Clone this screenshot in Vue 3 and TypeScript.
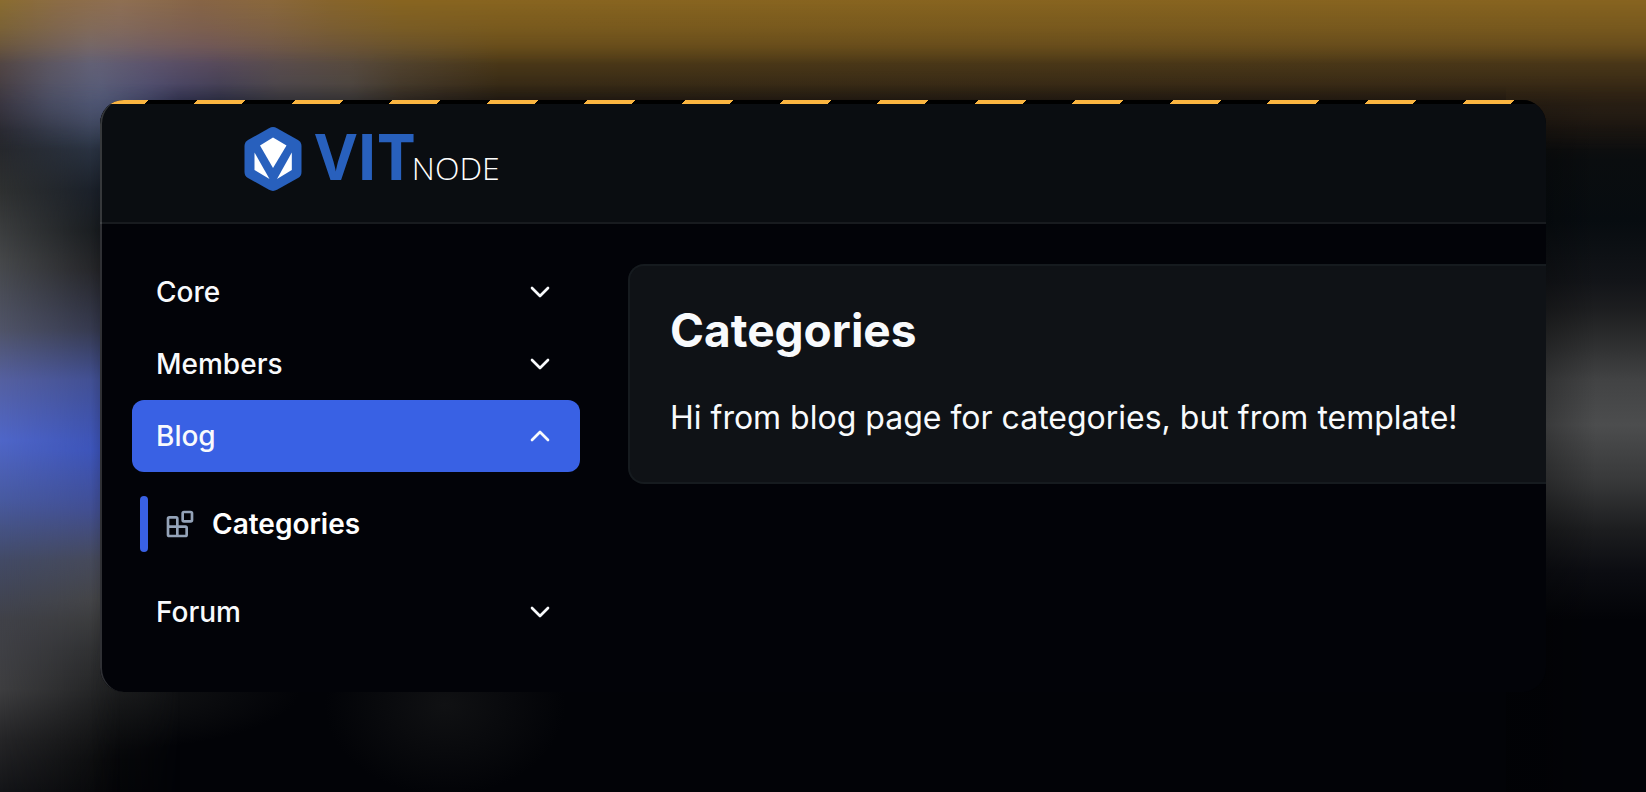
<script setup lang="ts">
import { ref } from 'vue'

interface Section {
  id: string
  label: string
  pages: string[]
}

const sections: Section[] = [
  { id: 'core', label: 'Core', pages: [] },
  { id: 'members', label: 'Members', pages: [] },
  { id: 'blog', label: 'Blog', pages: ['Categories'] },
  { id: 'forum', label: 'Forum', pages: [] },
]

const openId = ref('blog')

function toggle(id: string) {
  openId.value = openId.value === id ? '' : id
}
</script>

<template>
  <div class="backdrop">
    <div class="glow right"></div>
    <div class="glow left"></div>
    <div class="glow top"></div>
    <div class="window">
      <div class="stripes"></div>
      <header class="header">
        <a class="brand" href="#" aria-label="VitNode">
          <svg class="mark" viewBox="0 0 58 64" aria-hidden="true">
            <path
              d="M25 1.2Q29 -1 33 1.2L54 13Q57.500 15 57.500 19V45Q57.500 49 54 51L33 62.800Q29 65 25 62.800L4 51Q0.500 49 0.500 45V19Q0.500 15 4 13Z"
              fill="#2860bd"
            />
            <path d="M29 10.500L42.500 18.500L29 41L16 18.500Z" fill="#fff" />
            <path d="M10.500 25.500L25.500 52L10.500 43Z" fill="#fff" />
            <path d="M47.800 25.500V43L33 52Z" fill="#fff" />
          </svg>
          <span class="vit">VIT</span><span class="node">NODE</span>
        </a>
      </header>
      <div class="body">
        <nav class="nav" aria-label="Admin">
          <div v-for="s in sections" :key="s.id">
            <button
              type="button"
              class="item"
              :class="{ active: openId === s.id }"
              :aria-expanded="openId === s.id"
              @click="toggle(s.id)"
            >
              <span>{{ s.label }}</span>
              <svg class="icon" viewBox="0 0 24 24" aria-hidden="true">
                <path :d="openId === s.id ? 'm18 15-6-6-6 6' : 'm6 9 6 6 6-6'" />
              </svg>
            </button>
            <div v-if="openId === s.id && s.pages.length" class="sub">
              <a v-for="p in s.pages" :key="p" class="page" href="#" aria-current="page">
                <svg class="icon muted" viewBox="0 0 24 24" aria-hidden="true">
                  <rect width="7" height="7" x="14" y="3" rx="1" />
                  <path
                    d="M10 21V8a1 1 0 0 0-1-1H4a1 1 0 0 0-1 1v12a1 1 0 0 0 1 1h12a1 1 0 0 0 1-1v-5a1 1 0 0 0-1-1H3"
                  />
                </svg>
                <span>{{ p }}</span>
              </a>
            </div>
          </div>
        </nav>
        <main class="card">
          <h1>Categories</h1>
          <p>Hi from blog page for categories, but from template!</p>
        </main>
      </div>
    </div>
  </div>
</template>

<style>
body {
  margin: 0;
  background: #020307;
}
</style>

<style scoped>
.backdrop {
  position: relative;
  box-sizing: border-box;
  min-height: 100vh;
  padding: 100px;
  overflow: hidden;
  font-family: Inter, 'Liberation Sans', sans-serif;
  color: #f8fafc;
  background:
    radial-gradient(ellipse 120px 90px at 445px 705px, #101113, transparent),
    radial-gradient(ellipse 200px 60px at 100px 690px, #161718, transparent),
    #020307;
}

/* Soft coloured light behind the window, one band per side. */
.glow,
.glow::before,
.glow::after {
  position: absolute;
  top: 0;
  left: 0;
}

.glow::before,
.glow::after {
  width: 100%;
  height: 100%;
}

.glow.top {
  width: 100%;
  height: 150px;
  background: linear-gradient(90deg, #3c3844, #4c5068 50px, #525a7a 100px, #464a70 150px, #3c3e62 180px, #353852 220px, #42424a 280px, #444242 350px, #383028 400px, #302820 440px, #251d14 500px, #281e13);
  mask-image: linear-gradient(#000 84px, transparent);
}

.glow.top::before {
  content: '';
  background: linear-gradient(90deg, #5c4c44, #6a6474 90px, #66586a 150px, #665260 210px, #635048 300px, #5c4a30 400px, #5a4319 500px, #58411a);
  mask-image: linear-gradient(#000 45px, transparent 106px);
}

.glow.top::after {
  content: '';
  background: linear-gradient(90deg, #8a6d30, #8c6c45 60px, #8f6f52 120px, #876545 200px, #8a683c 270px, #87652c 330px, #886520 400px, #876420);
  mask-image: linear-gradient(#000, #000a 28px, transparent 64px);
}

.glow.left {
  width: 180px;
  height: 100%;
  background: linear-gradient(#525a78 95px, #303c50 140px, #151c28 190px, #101418 230px, #1c1c1f 270px, #2e3248 330px, #3c4b90 380px, #3850b8 450px, #404c90 510px, #474a58 560px, #454545 600px, #2c2d2e 650px, #1a1b1c 700px, #08090a 760px, #050608);
  mask-image: linear-gradient(90deg, #000 90px, transparent);
}

.glow.left::before {
  content: '';
  background: linear-gradient(#38353e 95px, #22242a 130px, #2e3030 190px, #454749 260px, #505468 330px, #5560a0 380px, #4f66c8 440px, #485aa0 500px, #424a66 560px, #404148 620px, #3e3e40 690px, #252527 740px, #141518 790px);
  mask-image: linear-gradient(90deg, #000, #0009 50px, transparent 120px);
}

.glow.right {
  left: auto;
  right: 0;
  width: 140px;
  height: 100%;
  background: linear-gradient(#281e13 95px, #231b14 110px, #14110f 128px, #0a0d0f 160px, #070c10 220px, #121418 280px, #1d1e20 310px, #2c2d2e 340px, #424344 380px, #4c4d4e 425px, #38393a 480px, #1c1d1f 530px, #0c0d12 570px, #020307 620px);
}

.glow.right::before {
  content: '';
  background: linear-gradient(90deg, rgba(0, 0, 0, 0.25) 40px, transparent 90px);
}

.window {
  position: relative;
  overflow: hidden;
  border-radius: 24px;
  background: #020308;
}

.window::after {
  content: '';
  position: absolute;
  inset: 0;
  border-left: 2px solid rgba(255, 255, 255, 0.18);
  border-radius: inherit;
  pointer-events: none;
}

.stripes {
  height: 4px;
  background: repeating-linear-gradient(135deg, #fbb540 0 34px, #000 34px 69px);
}

.header {
  padding: 23px 144px 31px;
  background: #0a0d11;
  border-bottom: 2px solid #181b1f;
}

.brand {
  display: flex;
  width: max-content;
  height: 64px;
  align-items: baseline;
  color: #fff;
  text-decoration: none;
  font-family: 'Open Sans', 'Noto Sans', sans-serif;
  line-height: 58px;
}

.mark {
  width: 58px;
  height: 64px;
  margin-right: 13px;
  align-self: center;
}

.vit {
  font-size: 64px;
  font-weight: 700;
  color: #2860bd;
}

.node {
  margin-left: -3px;
  font-size: 32px;
  font-weight: 300;
}

.body {
  display: grid;
  grid-template-columns: 448px minmax(0, 1fr);
  column-gap: 48px;
  align-items: start;
  padding: 32px 0 44px 32px;
}

.item {
  display: flex;
  box-sizing: border-box;
  width: 100%;
  height: 72px;
  align-items: center;
  justify-content: space-between;
  padding: 0 24px;
  border: 0;
  border-radius: 12px;
  background: transparent;
  color: inherit;
  font: 500 28px/40px Inter, 'Liberation Sans', sans-serif;
  cursor: pointer;
}

.item.active {
  background: #3961e4;
}

.icon {
  width: 32px;
  height: 32px;
  fill: none;
  stroke: currentColor;
  stroke-width: 2;
  stroke-linecap: round;
  stroke-linejoin: round;
}

.icon.muted {
  color: #94a3b8;
}

.sub {
  padding: 24px 8px;
}

.page {
  display: flex;
  height: 56px;
  align-items: center;
  gap: 16px;
  color: #fff;
  font-size: 28px;
  font-weight: 600;
  text-decoration: none;
}

.page::before {
  content: '';
  width: 8px;
  height: 56px;
  border-radius: 4px;
  background: #3961e4;
}

.card {
  margin-top: 8px;
  padding: 40px;
  border: 2px solid #161b1f;
  border-right: 0;
  border-radius: 16px 0 0 16px;
  background: #0f1216;
}

h1 {
  margin: 0 0 40px;
  font-size: 46px;
  font-weight: 700;
  line-height: 48px;
}

p {
  margin: 0;
  font-size: 32px;
  line-height: 48px;
}
</style>
